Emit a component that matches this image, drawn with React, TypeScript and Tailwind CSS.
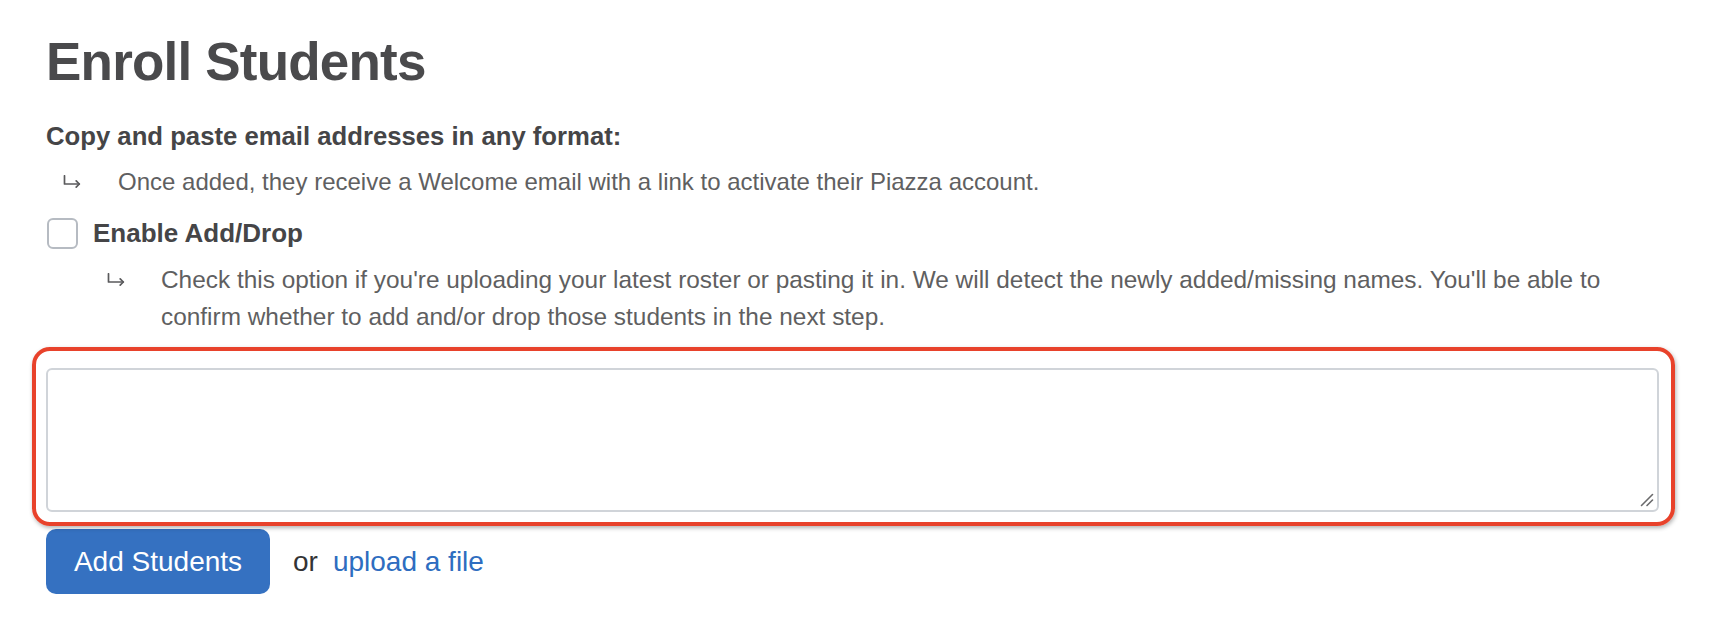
import React from "react";

const FONT = { fontFamily: '"Liberation Sans", Arial, Helvetica, sans-serif' };

function HookArrow({ className }: { className?: string }) {
  return (
    <svg
      className={className}
      width="18"
      height="13"
      viewBox="0 0 18 13"
      fill="none"
      stroke="#5a5a5c"
      strokeWidth="1.7"
      strokeLinecap="round"
      strokeLinejoin="round"
    >
      <path d="M1.5 0.8 V9 H16.3" />
      <path d="M13.2 5.9 L16.3 9 L13.2 12.1" />
    </svg>
  );
}

export default function App() {
  return (
    <div className="min-h-screen bg-white" style={FONT}>
      <div className="pl-[46px] pr-[53px] pt-[35px]">
        <h1 className="text-[53px] leading-[53px] font-bold tracking-[-0.8px] text-[#4a4a4c]">
          Enroll Students
        </h1>

        <p className="mt-[33px] text-[25.7px] leading-[30px] font-bold text-[#454547]">
          Copy and paste email addresses in any format:
        </p>

        <div className="mt-[14px] flex">
          <HookArrow className="mt-[10px] ml-[17px] shrink-0" />
          <p className="ml-[37px] text-[24px] leading-[34px] text-[#5f5f61]">
            Once added, they receive a Welcome email with a link to activate their Piazza account.
          </p>
        </div>

        <label className="mt-[19px] flex items-center">
          <input
            type="checkbox"
            className="ml-[1px] h-[31px] w-[31px] shrink-0 appearance-none rounded-[6px] border-2 border-[#b6bbc2] bg-white"
          />
          <span className="ml-[15px] text-[26px] leading-[31px] font-bold text-[#454547]">
            Enable Add/Drop
          </span>
        </label>

        <div className="mt-[12px] flex">
          <HookArrow className="mt-[12px] ml-[61px] shrink-0" />
          <p className="ml-[36px] text-[24.4px] leading-[37px] text-[#5f5f61]">
            Check this option if you're uploading your latest roster or pasting it in. We will detect the newly
            added/missing names. You'll be able to confirm whether to add and/or drop those students in the next step.
          </p>
        </div>

        <div className="relative mt-[33px]">
          <textarea className="block h-[144px] w-full resize-none rounded-[6px] border-2 border-[#d0d4d9] bg-white p-2 text-[24px] outline-none" />
          <svg
            className="pointer-events-none absolute bottom-[5px] right-[5px]"
            width="14"
            height="14"
            viewBox="0 0 14 14"
            stroke="#6a6a6c"
            strokeWidth="1.6"
            strokeLinecap="round"
          >
            <path d="M1.5 12.5 L12.5 1.5" />
            <path d="M7 12.5 L12.5 7" />
          </svg>
          <div className="pointer-events-none absolute -left-[14px] -right-[16px] -top-[21px] -bottom-[14px] rounded-[18px] border-4 border-[#e8422b] shadow-[1px_2px_4px_rgba(0,0,0,0.3)]" />
        </div>

        <div className="mt-[17px] flex items-center">
          <button className="h-[65px] w-[224px] rounded-[10px] bg-[#3571c1] text-[28px] text-white">
            Add Students
          </button>
          <span className="ml-[23px] text-[28px] text-[#333335]">or</span>
          <a href="#" className="ml-[15px] text-[28px] text-[#2e6dc0]">
            upload a file
          </a>
        </div>
      </div>
    </div>
  );
}
